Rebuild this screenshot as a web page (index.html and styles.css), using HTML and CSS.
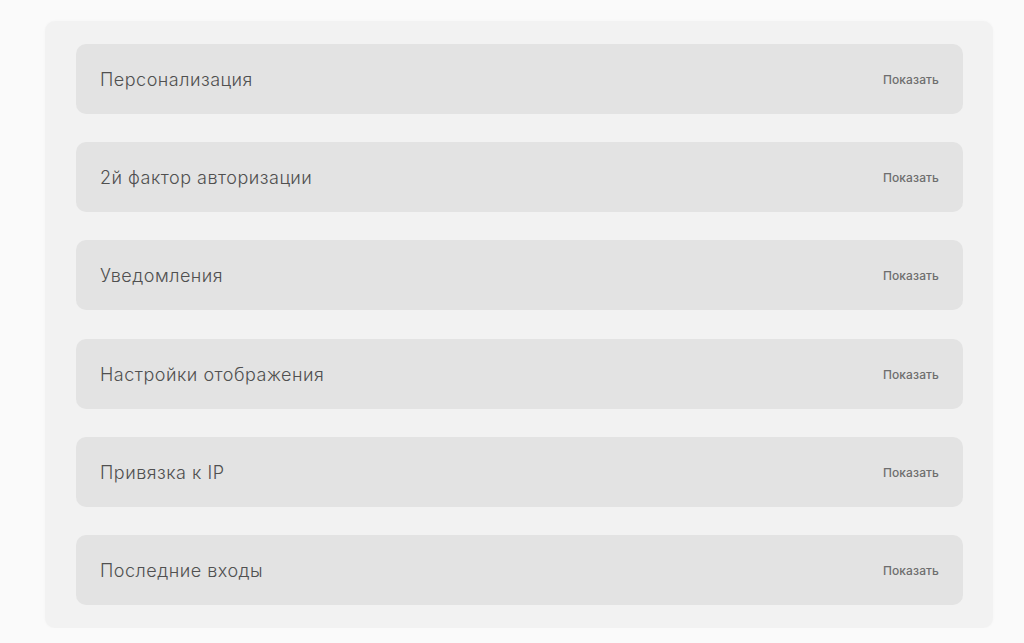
FILE: index.html
```html
<!DOCTYPE html>
<html lang="ru">
<head>
<meta charset="utf-8">
<link rel="stylesheet" href="styles.css">
</head>
<body>
<div class="panel">
  <div class="row"><span class="title">Персонализация</span><span class="toggle">Показать</span></div>
  <div class="row"><span class="title">2й фактор авторизации</span><span class="toggle">Показать</span></div>
  <div class="row"><span class="title">Уведомления</span><span class="toggle">Показать</span></div>
  <div class="row"><span class="title">Настройки отображения</span><span class="toggle">Показать</span></div>
  <div class="row"><span class="title">Привязка к IP</span><span class="toggle">Показать</span></div>
  <div class="row"><span class="title">Последние входы</span><span class="toggle">Показать</span></div>
</div>
</body>
</html>
```
FILE: styles.css
```css
html, body {
  margin: 0;
  padding: 0;
  background: #fafafa;
}
body {
  padding: 21px 31px 0 45px;
  font-family: Inter, "Noto Sans", sans-serif;
}
.panel {
  width: 948px;
  box-sizing: border-box;
  background: #f2f2f2;
  border-radius: 10px;
  padding: 23px 30px 23px 31px;
  display: flex;
  flex-direction: column;
  gap: 28.2px;
  box-shadow: 0 0 3px rgba(0,0,0,0.03);
}
.row {
  box-sizing: border-box;
  height: 70px;
  background: #e3e3e3;
  border-radius: 10px;
  display: flex;
  align-items: center;
  justify-content: space-between;
  padding: 1px 24px 0;
}
.title {
  font-size: 18px;
  color: #505050;
  font-weight: 350;
  letter-spacing: 0.5px;
}
.toggle {
  font-size: 12px;
  color: #6e6e6e;
  font-weight: 500;
  letter-spacing: 0.1px;
}
```
